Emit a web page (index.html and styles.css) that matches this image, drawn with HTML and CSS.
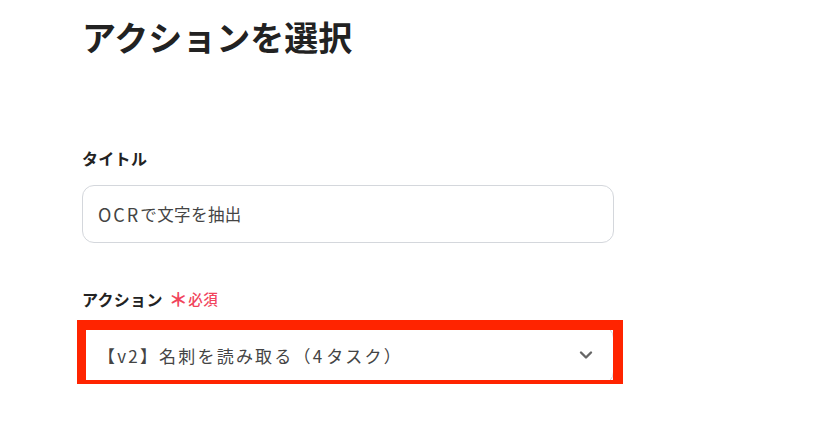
FILE: index.html
```html
<!DOCTYPE html>
<html lang="ja">
<head>
<meta charset="utf-8">
<link rel="stylesheet" href="styles.css">
</head>
<body>
<main class="page">
  <h1 class="heading">アクションを選択</h1>
  <div class="field field-title">
    <div class="label">タイトル</div>
    <div class="input"><span class="latin">OCR</span>で文字を抽出</div>
  </div>
  <div class="field field-action">
    <div class="label">アクション<span class="required"><span class="star">＊</span>必須</span></div>
    <div class="select-wrap">
      <div class="input select">
        <span class="select-text">【v2】名刺を読み取る（<span class="num">4</span>タスク）</span>
        <svg class="chevron" width="14" height="10" viewBox="0 0 14 10"><path d="M2 2.5 L7 7.5 L12 2.5" fill="none" stroke="#666" stroke-width="2.4" stroke-linecap="round" stroke-linejoin="round"/></svg>
      </div>
      <div class="highlight"></div>
    </div>
  </div>
</main>
</body>
</html>
```
FILE: styles.css
```css
html, body {
  margin: 0;
  padding: 0;
  background: #ffffff;
}
body {
  font-family: "Noto Sans CJK JP", "Noto Sans", sans-serif;
  color: #222;
}
.page {
  padding: 12px 0 0 82px;
  width: 532px;
}
.heading {
  margin: 0;
  font-size: 34px;
  line-height: 50px;
  font-weight: 700;
  color: #222;
}
.field-title {
  margin-top: 84px;
}
.field-action {
  margin-top: 44px;
}
.label {
  font-size: 16px;
  line-height: 24px;
  font-weight: 700;
  color: #222;
  margin-bottom: 15px;
  display: flex;
  align-items: center;
  letter-spacing: 0.3px;
}
.required {
  margin-left: 6px;
  font-size: 14.5px;
  font-weight: 500;
  color: #f1445c;
  display: inline-flex;
  align-items: center;
  letter-spacing: 0.5px;
}
.star {
  font-size: 19px;
  font-weight: 700;
  margin-right: 0;
}
.input {
  box-sizing: border-box;
  height: 58px;
  border: 1px solid #d4d7dc;
  border-radius: 12px;
  padding: 0 15px;
  display: flex;
  align-items: center;
  font-size: 16.5px;
  color: #444;
  letter-spacing: 0.4px;
}
.latin {
  font-size: 18px;
  letter-spacing: 2px;
}
.select {
  justify-content: space-between;
  padding: 0 20px 0 15px;
}
.select-text {
  font-size: 17px;
  letter-spacing: 2.2px;
}
.num {
  letter-spacing: 4px;
}
.chevron {
  display: block;
}
.select-wrap {
  position: relative;
}
.highlight {
  position: absolute;
  top: -6px;
  left: -5px;
  right: -9px;
  bottom: -6px;
  border-style: solid;
  border-color: #ff2400;
  border-width: 10px 10px 10px 9px;
}
```
